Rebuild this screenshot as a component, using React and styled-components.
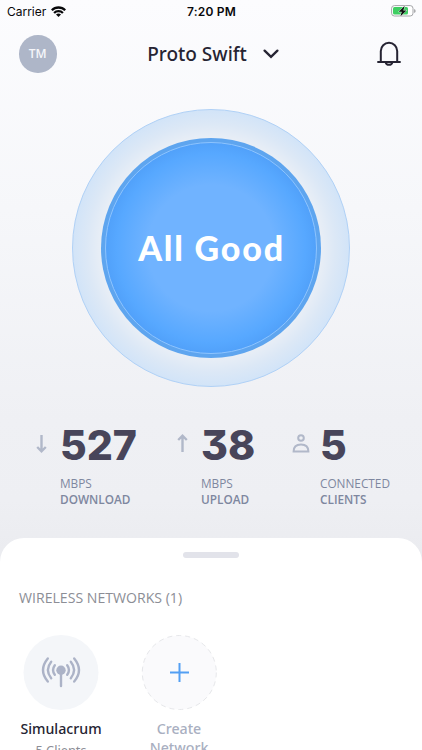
import styled, { createGlobalStyle } from "styled-components";

const GlobalStyle = createGlobalStyle`
  * {
    box-sizing: border-box;
  }

  body {
    margin: 0;
    overflow: hidden;
    font-family: "Open Sans", "Noto Sans", sans-serif;
    color: #262433;
  }
`;

const Screen = styled.main`
  display: flex;
  flex-direction: column;
  width: 422px;
  height: 750px;
  overflow: hidden;
  background: linear-gradient(#fcfcfe 0, #f6f7fa 210px, #eff0f4 420px, #eeeff3 500px, #ebecf0 550px);
`;

const StatusBar = styled.div`
  display: grid;
  grid-template-columns: 1fr auto 1fr;
  align-items: center;
  flex: none;
  height: 22px;
  padding: 0 6px 0 7px;
  font-family: Inter, sans-serif;
  font-size: 12px;
  color: #08080a;

  strong {
    font-weight: 600;
    letter-spacing: 0.2px;
  }
`;

const Carrier = styled.span`
  display: flex;
  align-items: center;
  gap: 5px;
  letter-spacing: -0.02px;
`;

const BatteryIcon = styled.svg`
  justify-self: end;
`;

const Header = styled.header`
  display: grid;
  grid-template-columns: 38px 1fr 32px;
  align-items: center;
  flex: none;
  height: 64px;
  padding: 0 20px 0 19px;

  > svg {
    justify-self: end;
  }
`;

const Avatar = styled.div`
  width: 37.5px;
  height: 37.5px;
  border-radius: 50%;
  background: #aeb6c8;
  color: #f5f6fa;
  font-size: 12px;
  font-weight: 600;
  line-height: 37px;
  text-align: center;
`;

const NetworkPicker = styled.button`
  display: flex;
  align-items: center;
  justify-content: center;
  gap: 16px;
  padding: 0 1px 0 0;
  border: 0;
  background: none;
  color: inherit;
  font: 500 19px/26px "Noto Sans", sans-serif;
`;

const Halo = styled.section`
  display: grid;
  place-items: center;
  flex: none;
  width: 278px;
  height: 278px;
  margin: 23px auto 0;
  border: 1.5px solid #b0d1f6;
  border-radius: 50%;
  background: radial-gradient(circle closest-side, #e8eef6 80%, #dce8f6 90%, #d2e4f8 100%);
`;

const Orb = styled.div`
  display: grid;
  place-items: center;
  width: 220px;
  height: 220px;
  border-radius: 50%;
  background: #5ea5ef;
`;

const OrbFace = styled.div`
  width: 212px;
  height: 212px;
  border: 1px solid #8dc4ff;
  border-radius: 50%;
  background: radial-gradient(circle closest-side, #70b3ff 0, #70b3ff 60%, #57a8ff 90%, #51a1fa 100%);
  color: #fff;
  font: 900 34px/209px Lato, sans-serif;
  letter-spacing: 1.8px;
  text-indent: 1px;
  text-align: center;
  white-space: nowrap;
`;

const Stats = styled.section`
  display: grid;
  grid-template-columns: 141px 119px 1fr;
  flex: none;
  height: 151px;
  padding: 38px 0 0 32px;
`;

const Stat = styled.div`
  display: grid;
  grid-template-columns: 28px 1fr;
  align-items: start;

  svg {
    margin-top: 9px;
  }
`;

const StatValue = styled.div`
  height: 50px;
  color: #48455a;
  font: 800 41px/40px Inter, sans-serif;
  font-feature-settings: "cv09";
`;

const StatLabel = styled.div`
  color: #7e879f;
  font-size: 11.8px;
  line-height: 16px;
  white-space: nowrap;

  strong {
    display: block;
    font-weight: 600;
  }
`;

const Sheet = styled.section`
  flex: 1;
  min-height: 0;
  border-radius: 24px 24px 0 0;
  background: #fff;
`;

const Handle = styled.div`
  width: 56px;
  height: 6px;
  margin: 14px auto 0;
  border-radius: 3px;
  background: #e2e3ea;
`;

const SheetTitle = styled.h2`
  margin: 30px 0 0 19px;
  color: #8c8e96;
  font-size: 14.1px;
  font-weight: 400;
  line-height: 20px;
`;

const Networks = styled.div`
  display: flex;
  gap: 18px;
  padding: 26px 0 0 11px;
`;

const Network = styled.div`
  display: flex;
  flex-direction: column;
  align-items: center;
  width: 100px;
  color: ${({ $muted }) => ($muted ? "#a9afc1" : "#262433")};
  font-family: "Noto Sans", sans-serif;
  font-size: 14.2px;
  font-weight: 500;
  line-height: 19px;
  text-align: center;

  small {
    margin-top: 3px;
    color: #8c8e96;
    font-size: 12.8px;
    font-weight: 400;
  }
`;

const NetworkIcon = styled.svg`
  display: block;
  margin-bottom: 9px;
`;

const WifiIcon = () => (
  <svg width="15" height="11" viewBox="0 0 15 11" fill="none" stroke="#08080a" strokeWidth="2.3">
    <path d="M.8 4.3a9.4 9.4 0 0 1 13.4 0M3.1 7a6.2 6.2 0 0 1 8.8 0" />
    <path d="M7.5 11 5 8.6a3.6 3.6 0 0 1 5 0z" fill="#08080a" stroke="none" />
  </svg>
);

const Battery = () => (
  <BatteryIcon width="25" height="12" viewBox="0 0 25 12">
    <rect x=".6" y=".6" width="21.4" height="10.4" rx="2.8" fill="#fff" stroke="#a4a5a8" />
    <rect x="2" y="2" width="15" height="7.6" rx="1.5" fill="#3ece62" />
    <path d="M23.2 4v4q1.4-.5 1.4-2t-1.4-2z" fill="#98999c" />
    <path d="m13.7.8-6 6h3.1l-1.5 4.6 6.2-6h-3.2z" fill="#111" stroke="#fff" strokeWidth=".8" paintOrder="stroke" />
  </BatteryIcon>
);

const ChevronIcon = () => (
  <svg width="16" height="10" viewBox="0 0 16 10" fill="none" stroke="#262433" strokeWidth="2.3" strokeLinecap="round">
    <path d="m1.6 1.6 6.4 6.3 6.4-6.3" />
  </svg>
);

const BellIcon = () => (
  <svg width="26" height="28" viewBox="0 0 26 28" fill="none" stroke="#262433" strokeWidth="2">
    <path d="M4.8 21.8V11a8.2 8.2 0 0 1 16.4 0v10.8" />
    <path d="M1.3 22h23.4M9.6 22.2a3.5 3.5 0 0 0 6.8 0" />
  </svg>
);

const ArrowIcon = ({ up }) => (
  <svg width="19" height="19" viewBox="0 0 19 19" fill="none" stroke="#b1b8c9" strokeWidth="2.4">
    {up ? <path d="M9.5 18V2M5.2 6l4.3-4.3L13.8 6" /> : <path d="M9.5 1v16M5.2 13l4.3 4.3 4.3-4.3" />}
  </svg>
);

const PersonIcon = () => (
  <svg width="18" height="19" viewBox="0 0 18 19" fill="none" stroke="#b1b8c9" strokeWidth="2">
    <circle cx="9" cy="4" r="2.8" />
    <path d="M1.6 17.4h14.8c0-4.2-2.7-7-7.4-7s-7.4 2.8-7.4 7z" />
  </svg>
);

const AntennaIcon = () => (
  <NetworkIcon width="76" height="76" viewBox="0 0 76 76" fill="none">
    <circle cx="38" cy="38.5" r="37.5" fill="#f4f6f9" />
    <circle cx="38" cy="36.3" r="4.7" fill="#acb3c7" />
    <g stroke="#acb3c7" strokeWidth="2.4" strokeLinecap="round">
      <path d="M38 36v16" />
      <path d="M31.8 31.2q-3.5 4.8 0 9.6M28.2 27.8q-6.6 8.2 0 16.4M24.8 24.5q-9.6 11.7 0 23" />
      <path d="M44.2 31.2q3.5 4.8 0 9.6M47.8 27.8q6.6 8.2 0 16.4M51.2 24.5q9.6 11.7 0 23" />
    </g>
  </NetworkIcon>
);

const AddIcon = () => (
  <NetworkIcon width="76" height="76" viewBox="0 0 76 76" fill="none">
    <circle cx="38.3" cy="38.5" r="37" fill="#fafafc" stroke="#e6e7ea" strokeDasharray="5 4" />
    <path d="M38.5 29v19M29 38.5h19" stroke="#539ff3" strokeWidth="2" />
  </NetworkIcon>
);

export default function App() {
  return (
    <Screen>
      <GlobalStyle />
      <StatusBar>
        <Carrier>
          Carrier <WifiIcon />
        </Carrier>
        <strong>7:20 PM</strong>
        <Battery />
      </StatusBar>
      <Header>
        <Avatar>TM</Avatar>
        <NetworkPicker>
          Proto Swift <ChevronIcon />
        </NetworkPicker>
        <BellIcon />
      </Header>
      <Halo>
        <Orb>
          <OrbFace>All Good</OrbFace>
        </Orb>
      </Halo>
      <Stats>
        <Stat>
          <ArrowIcon />
          <div>
            <StatValue>527</StatValue>
            <StatLabel>
              MBPS <strong>DOWNLOAD</strong>
            </StatLabel>
          </div>
        </Stat>
        <Stat>
          <ArrowIcon up />
          <div>
            <StatValue>38</StatValue>
            <StatLabel>
              MBPS <strong>UPLOAD</strong>
            </StatLabel>
          </div>
        </Stat>
        <Stat>
          <PersonIcon />
          <div>
            <StatValue>5</StatValue>
            <StatLabel>
              CONNECTED <strong>CLIENTS</strong>
            </StatLabel>
          </div>
        </Stat>
      </Stats>
      <Sheet>
        <Handle />
        <SheetTitle>WIRELESS NETWORKS (1)</SheetTitle>
        <Networks>
          <Network>
            <AntennaIcon />
            Simulacrum
            <small>5 Clients</small>
          </Network>
          <Network $muted>
            <AddIcon />
            Create
            <br />
            Network
          </Network>
        </Networks>
      </Sheet>
    </Screen>
  );
}
